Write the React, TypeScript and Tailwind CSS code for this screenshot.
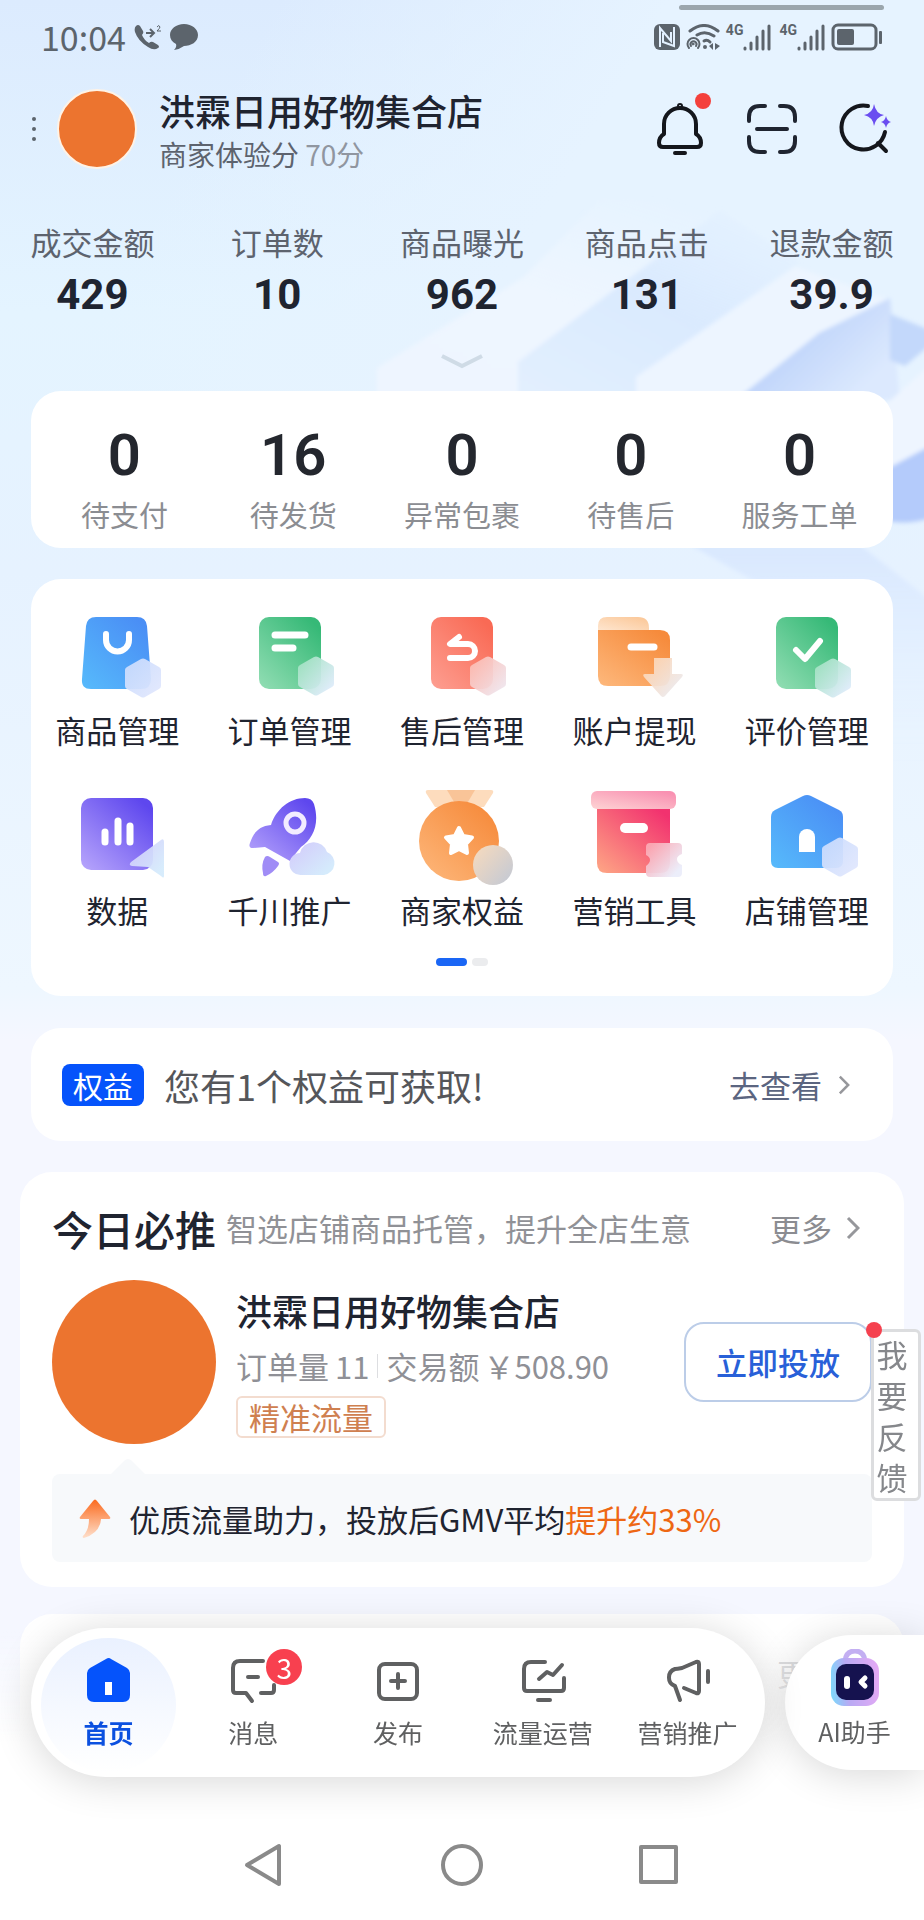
import type { ReactNode } from 'react';

const metrics = [
    { label: '成交金额', value: '429' },
    { label: '订单数', value: '10' },
    { label: '商品曝光', value: '962' },
    { label: '商品点击', value: '131' },
    { label: '退款金额', value: '39.9' },
];

const orders = [
    { label: '待支付', value: '0' },
    { label: '待发货', value: '16' },
    { label: '异常包裹', value: '0' },
    { label: '待售后', value: '0' },
    { label: '服务工单', value: '0' },
];

// Shared gradients for the shortcut icons
function IconGradients() {
    const diagonal = [
        { id: 'blue', from: '#4a8ef5', to: '#56b8fb' },
        { id: 'green', from: '#36b977', to: '#8edcb1' },
        { id: 'red', from: '#f96a55', to: '#fd9c8e' },
        { id: 'orange', from: '#f68b3c', to: '#fdb679' },
        { id: 'purple', from: '#5e47ee', to: '#b3a1fb' },
        { id: 'pink', from: '#f2326f', to: '#fda184' },
        { id: 'tabOrange', from: '#fbc99b', to: '#fee6d0' },
        { id: 'lid', from: '#f991b2', to: '#fdd0d2' },
    ];
    const glass = [
        { id: 'glassBlue', from: '#cbdcfd', to: '#dfe6fd' },
        { id: 'glassGreen', from: '#a4e2c4', to: '#dcebf8' },
        { id: 'glassRed', from: '#fcbdb4', to: '#f0e3ea' },
        { id: 'glassOrange', from: '#fdd5b3', to: '#eceaee' },
        { id: 'glassPurple', from: '#d3cdfb', to: '#d5ebfc' },
        { id: 'glassGray', from: '#f3d9bf', to: '#c9cbd2' },
        { id: 'glassPink', from: '#fba9b4', to: '#ebedfa' },
    ];
    return (
        <svg className="absolute h-0 w-0" aria-hidden="true">
            <defs>
                {diagonal.map((g) => (
                    <linearGradient key={g.id} id={g.id} x1="0.9" y1="0.1" x2="0.1" y2="1">
                        <stop offset="0" stopColor={g.from} />
                        <stop offset="1" stopColor={g.to} />
                    </linearGradient>
                ))}
                {glass.map((g) => (
                    <linearGradient key={g.id} id={g.id} x1="0.1" y1="0.1" x2="0.9" y2="0.8">
                        <stop offset="0" stopColor={g.from} />
                        <stop offset="1" stopColor={g.to} />
                    </linearGradient>
                ))}
            </defs>
        </svg>
    );
}

function ShortcutIcon({ children }: { children: ReactNode }) {
    return (
        <svg viewBox="0 0 90 90" className="h-[90px] w-[90px] overflow-visible" fill="none" aria-hidden="true">
            {children}
        </svg>
    );
}

function Hexagon({ y, fill }: { y: number; fill: string }) {
    return (
        <path
            transform={`translate(71 ${y})`}
            d="M-2 -19 Q0 -20 2 -19 L16 -11 Q18 -10 18 -8 V8 Q18 10 16 11 L2 19 Q0 20 -2 19 L-16 11 Q-18 10 -18 8 V-8 Q-18 -10 -16 -11 Z"
            fill={fill}
            opacity="0.94"
        />
    );
}

const shortcuts = [
    {
        label: '商品管理',
        icon: (
            <ShortcutIcon>
                <path d="M24 5 H65 Q74 5 75 14 L79 67 Q79 77 69 77 H19 Q9 77 10 67 L14 14 Q15 5 24 5 Z" fill="url(#blue)" />
                <path d="M34 22 v6 a11 11 0 0 0 23 0 v-6" stroke="#fff" strokeWidth="6" strokeLinecap="round" />
                <Hexagon y={66} fill="url(#glassBlue)" />
            </ShortcutIcon>
        ),
    },
    {
        label: '订单管理',
        icon: (
            <ShortcutIcon>
                <rect x="14" y="5" width="62" height="72" rx="10" fill="url(#green)" />
                <path d="M30 23 H60 M30 36 H48" stroke="#fff" strokeWidth="7" strokeLinecap="round" />
                <Hexagon y={64} fill="url(#glassGreen)" />
            </ShortcutIcon>
        ),
    },
    {
        label: '售后管理',
        icon: (
            <ShortcutIcon>
                <rect x="14" y="5" width="62" height="72" rx="10" fill="url(#red)" />
                <path d="M42 25 L33 32 H51 a7 7 0 0 1 0 14 H33" stroke="#fff" strokeWidth="6" strokeLinecap="round" strokeLinejoin="round" />
                <Hexagon y={64} fill="url(#glassRed)" />
            </ShortcutIcon>
        ),
    },
    {
        label: '账户提现',
        icon: (
            <ShortcutIcon>
                <path d="M9 20 V14 Q9 5 18 5 H49 Q60 5 60 16 V20 Z" fill="url(#tabOrange)" />
                <path d="M9 18 H71 Q81 18 81 28 V64 Q81 74 71 74 H19 Q9 74 9 64 Z" fill="url(#orange)" />
                <path d="M42 35 H65" stroke="#fff" strokeWidth="7" strokeLinecap="round" />
                <path d="M65 46 H83 V62 H92 Q95 62 93 65 L76 84 Q74 86 72 84 L55 65 Q53 62 56 62 H65 Z" fill="url(#glassOrange)" opacity="0.94" />
            </ShortcutIcon>
        ),
    },
    {
        label: '评价管理',
        icon: (
            <ShortcutIcon>
                <rect x="14" y="5" width="62" height="72" rx="10" fill="url(#green)" />
                <path d="M34 38 L43 47 L58 29" stroke="#fff" strokeWidth="6" strokeLinecap="round" strokeLinejoin="round" />
                <Hexagon y={66} fill="url(#glassGreen)" />
            </ShortcutIcon>
        ),
    },
    {
        label: '数据',
        icon: (
            <ShortcutIcon>
                <rect x="9" y="6" width="72" height="72" rx="10" fill="url(#purple)" />
                <path d="M33 40 V50 M46 29 V50 M58 34 V50" stroke="#fff" strokeWidth="7" strokeLinecap="round" />
                <path d="M59 70 L89 48 Q92 46 92 50 V84 Q92 87 89 84 L76 75 L60 74 Q56 73 59 70 Z" fill="url(#glassPurple)" opacity="0.94" />
            </ShortcutIcon>
        ),
    },
    {
        label: '千川推广',
        icon: (
            <ShortcutIcon>
                <path
                    d="M26 33 C31 17 45 6 60 6 Q67 6 69 12 C75 32 68 47 56 55 Q50 62 45 69 L20 55 L8 56 Q3 56 5 51 C8 42 13 34 26 33 Z"
                    fill="url(#purple)"
                />
                <circle cx="50" cy="31" r="9" stroke="#f2ecff" strokeWidth="5" />
                <path d="M20 65 Q22 63 25 65 L33 70 Q35 71 33 74 Q28 81 21 84 Q18 85 18 81 Q16 72 20 65 Z" fill="#a08cf6" />
                <path d="M56 83 a11 11 0 0 1 -1 -22 a14 14 0 0 1 27 -1 a12 12 0 0 1 -3 23 Z" fill="url(#glassPurple)" />
            </ShortcutIcon>
        ),
    },
    {
        label: '商家权益',
        icon: (
            <ShortcutIcon>
                <path d="M11 -2 H74 Q77 -2 76 1 L67 15 H18 L9 1 Q8 -2 11 -2 Z" fill="#fddcbd" />
                <path d="M30 -2 H58 L48 15 H40 Z" fill="#f9c498" />
                <circle cx="42" cy="49" r="40" fill="url(#orange)" />
                <path
                    d="M42 36 L46 44 L55 45.500 L49 52 L50 61 L42 57 L34 61 L35 52 L29 45.500 L38 44 Z"
                    fill="#fff"
                    stroke="#fff"
                    strokeWidth="4"
                    strokeLinejoin="round"
                />
                <circle cx="76" cy="73" r="20" fill="url(#glassGray)" />
            </ShortcutIcon>
        ),
    },
    {
        label: '营销工具',
        icon: (
            <ShortcutIcon>
                <path d="M8 14 H81 V71 Q81 81 71 81 H18 Q8 81 8 71 Z" fill="url(#pink)" />
                <rect x="2" y="-1" width="85" height="18" rx="6" fill="url(#lid)" />
                <rect x="31" y="31" width="28" height="10" rx="5" fill="#fff" />
                <path
                    d="M61 51 H89 Q93 51 93 55 V62 Q88 64 88 67 Q88 71 93 73 V81 Q93 85 89 85 H61 Q57 85 57 81 V74 Q61 71 61 68 Q61 65 57 63 V55 Q57 51 61 51 Z"
                    fill="url(#glassPink)"
                    opacity="0.95"
                />
            </ShortcutIcon>
        ),
    },
    {
        label: '店铺管理',
        icon: (
            <ShortcutIcon>
                <path d="M41 4 Q45 2 49 4 L77 18 Q81 20 81 25 V69 Q81 76 74 76 H16 Q9 76 9 69 V25 Q9 20 13 18 Z" fill="url(#blue)" />
                <path d="M37 60 V45 a8 8 0 0 1 16 0 V60 Z" fill="#fff" />
                <g transform="translate(7 0)">
                    <Hexagon y={65} fill="url(#glassBlue)" />
                </g>
            </ShortcutIcon>
        ),
    },
];

function TabIcon({ children }: { children: ReactNode }) {
    return (
        <svg
            viewBox="0 0 48 48"
            className="h-12 w-12"
            fill="none"
            stroke="#5f6061"
            strokeWidth="4"
            strokeLinecap="round"
            strokeLinejoin="round"
            aria-hidden="true"
        >
            {children}
        </svg>
    );
}

const tabs = [
    {
        label: '首页',
        active: true,
        icon: (
            <TabIcon>
                <path d="M22 3 Q25 1 27 3 L43 12 Q46 14 46 17 V39 Q46 46 39 46 H10 Q3 46 3 39 V17 Q3 14 6 12 Z" fill="#0553fb" stroke="none" />
                <rect x="21" y="26" width="7" height="13" fill="#fff" stroke="none" />
            </TabIcon>
        ),
    },
    {
        label: '消息',
        badge: 3,
        icon: (
            <TabIcon>
                <path d="M34 5 H11 Q4 5 4 12 V34 Q4 37 7 37 H17 L23 45 M32 37 H42 Q45 37 45 34 V29 M19 21 H29" />
            </TabIcon>
        ),
    },
    {
        label: '发布',
        icon: (
            <TabIcon>
                <rect x="5" y="8" width="38" height="35" rx="6" />
                <path d="M24 18 V32 M17 25 H31" />
            </TabIcon>
        ),
    },
    {
        label: '流量运营',
        icon: (
            <TabIcon>
                <path d="M26 6 H12 Q5 6 5 13 V32 Q5 35 8 35 H42 Q45 35 45 32 V22 M20 23 L28 16 L34 19 L43 9 M19 44 H31" />
            </TabIcon>
        ),
    },
    {
        label: '营销推广',
        icon: (
            <TabIcon>
                <path d="M20 32 L32 37 Q35 38 35 35 V8 Q35 5 32 6 L18 12 Q13 13 11 13 A9 9 0 0 0 11 30 L16 44 M44 15 V26" />
            </TabIcon>
        ),
    },
];

function ChevronRight({ className }: { className: string }) {
    return (
        <svg viewBox="0 0 14 24" className={className} fill="none" stroke="#96979b" strokeWidth="3" aria-hidden="true">
            <path d="M2 2 L12 12 L2 22" />
        </svg>
    );
}

function SignalBars() {
    return (
        <div className="flex items-start">
            <span className="font-[Roboto] text-[14px] leading-[13px] font-bold">4G</span>
            <svg viewBox="0 0 28 27" className="h-[27px] w-7" stroke="currentColor" strokeWidth="3" strokeLinecap="round" aria-hidden="true">
                <path d="M2 25 V24 M8 25 V19 M14 25 V13 M20 25 V7 M26 25 V2" />
            </svg>
        </div>
    );
}

function Backdrop() {
    return (
        <svg
            viewBox="0 0 924 1040"
            preserveAspectRatio="none"
            className="absolute inset-x-0 top-0 -z-10 h-[1040px] w-full"
            aria-hidden="true"
        >
            <defs>
                <linearGradient id="sky" x1="0" y1="0" x2="0" y2="1">
                    <stop offset="0" stopColor="#dcebfe" />
                    <stop offset="0.3" stopColor="#e4f4ff" />
                    <stop offset="0.55" stopColor="#e6f2ff" />
                    <stop offset="0.95" stopColor="#eef7ff" />
                    <stop offset="1" stopColor="#f5f7ff" />
                </linearGradient>
                <linearGradient id="glow" x1="0.3" y1="0" x2="0.7" y2="0.1">
                    <stop offset="0" stopColor="#e6f3ff" stopOpacity="0" />
                    <stop offset="1" stopColor="#e6f3ff" />
                </linearGradient>
                <linearGradient id="strip" x1="0.8" y1="0" x2="0.2" y2="1">
                    <stop offset="0" stopColor="#eef6ff" stopOpacity="0" />
                    <stop offset="0.5" stopColor="#eef6ff" />
                    <stop offset="1" stopColor="#eef5ff" />
                </linearGradient>
                <linearGradient id="shade" x1="0.9" y1="0" x2="0.1" y2="1">
                    <stop offset="0" stopColor="#daeafe" stopOpacity="0" />
                    <stop offset="0.5" stopColor="#daeafe" />
                    <stop offset="1" stopColor="#e2effe" />
                </linearGradient>
                <linearGradient id="fold" x1="0.3" y1="0.3" x2="0.9" y2="0.7">
                    <stop offset="0" stopColor="#bcd2fa" />
                    <stop offset="1" stopColor="#dce9fe" />
                </linearGradient>
                <linearGradient id="mist" x1="0" y1="0" x2="0" y2="1">
                    <stop offset="0" stopColor="#d9e8fe" />
                    <stop offset="1" stopColor="#e6f2ff" stopOpacity="0" />
                </linearGradient>
                <filter id="soften">
                    <feGaussianBlur stdDeviation="2" />
                </filter>
            </defs>
            <rect width="924" height="1040" fill="url(#sky)" />
            <rect width="924" height="400" fill="url(#glow)" />
            <g filter="url(#soften)">
                <path d="M377 368 L524 277 L600 200 H740 L518 365 V400 H377 Z" fill="url(#strip)" />
                <path d="M518 362 L720 210 L800 262 L636 377 V400 H518 Z" fill="url(#shade)" />
                <path d="M636 377 L795 267 L890 300 L742 400 H636 Z" fill="#edf5ff" />
                <path d="M742 395 L819 333 L890 298 L900 400 H742 Z" fill="url(#fold)" />
                <path d="M890 314 L930 330 V345 L905 366 L890 360 Z" fill="#c3d8fb" />
                <path d="M885 405 L930 365 V450 L885 480 Z" fill="#eef5ff" />
                <path d="M885 470 L930 446 V518 Q910 525 885 521 Z" fill="#b4cbfb" />
                <path d="M690 545 H860 L930 600 V760 H860 V590 H770 Z" fill="url(#mist)" />
            </g>
        </svg>
    );
}

export default function App() {
    return (
        <div className="relative isolate min-h-screen overflow-hidden bg-[#f5f7ff] font-['Noto_Sans_CJK_SC',sans-serif] text-[#1f2430]">
            <Backdrop />
            <IconGradients />

            {/* Status bar */}
            <div className="absolute top-[5px] right-10 h-[5px] w-[205px] rounded-full bg-[#9ba6ad]" />
            <div className="flex h-[74px] items-center justify-between pr-[41px] pl-[41px] text-[#5c646c]">
                <div className="flex items-center">
                    <span className="text-[34px] leading-10">10:04</span>
                    <svg viewBox="0 0 28 26" className="ml-2 h-[26px] w-7" aria-hidden="true">
                        <path
                            d="M2 2 Q4 0 6 2 L9 7 Q10 9 8 11 Q10 16 15 19 Q17 17 19 18 L24 21 Q26 23 24 24 Q20 27 14 23 Q4 17 1 8 Q0 4 2 2 Z"
                            fill="currentColor"
                        />
                        <path d="M12 9 H19 M16 5 L20 9 L16 13" fill="none" stroke="currentColor" strokeWidth="2" />
                        <path d="M23 3 Q25 0 26 3 Q26 4 23 7 H27" fill="none" stroke="currentColor" strokeWidth="1" />
                    </svg>
                    <svg viewBox="0 0 28 26" className="ml-2 h-[26px] w-7" fill="currentColor" aria-hidden="true">
                        <path d="M14 0 C22 0 28 5 28 11 C28 18 21 22 14 22 Q10 25 4 26 Q7 23 6 20 C2 18 0 15 0 11 C0 5 6 0 14 0 Z" />
                    </svg>
                </div>
                <div className="flex items-center">
                    <svg viewBox="0 0 26 26" className="h-[26px] w-[26px]" aria-hidden="true">
                        <rect width="26" height="26" rx="6" fill="currentColor" />
                        <path d="M6 23 V4 L17 17 V8 M9 9 V18 L20 22 V3" fill="none" stroke="#e4f1ff" strokeWidth="2" />
                    </svg>
                    <svg viewBox="0 0 34 26" className="mr-1.5 ml-1.5 h-[26px] w-[34px]" fill="none" stroke="currentColor" strokeLinecap="round" aria-hidden="true">
                        <path d="M4 7 Q18 -4 32 7 M11 11 Q19 6 28 12" strokeWidth="3" />
                        <path d="M18 17 Q21 15 24 18" strokeWidth="3" />
                        <path d="M3 24 A6 6 0 1 1 12 24 M5 22 A3 3 0 1 1 10 22" strokeWidth="2" />
                        <circle cx="7" cy="20" r="1" fill="currentColor" />
                        <circle cx="19" cy="23" r="2" fill="currentColor" stroke="none" />
                        <path d="M27 19 V26 L23 22 Z M29 19 L34 22 L29 26 Z" fill="currentColor" stroke="none" />
                    </svg>
                    <SignalBars />
                    <div className="ml-2">
                        <SignalBars />
                    </div>
                    <svg viewBox="0 0 52 28" className="ml-1.5 h-7 w-[52px]" aria-hidden="true">
                        <rect x="2" y="2" width="43" height="24" rx="5" fill="none" stroke="currentColor" strokeWidth="3" />
                        <rect x="6" y="6" width="17" height="16" rx="2" fill="currentColor" />
                        <rect x="48" y="8" width="3" height="13" rx="1" fill="currentColor" />
                    </svg>
                </div>
            </div>

            {/* Shop header */}
            <header className="flex items-center justify-between pt-[15px] pr-[33px] pl-[31px]">
                <div className="flex items-center">
                    <button type="button" aria-label="菜单">
                        <svg viewBox="0 0 6 24" className="h-6 w-1.5" fill="#5c646c" aria-hidden="true">
                            <circle cx="3" cy="2" r="2" />
                            <circle cx="3" cy="12" r="2" />
                            <circle cx="3" cy="22" r="2" />
                        </svg>
                    </button>
                    <div className="ml-5 h-20 w-20 rounded-full border-2 border-[#fff3e6] bg-[#ec742f]" />
                    <div className="ml-[22px] flex h-20 flex-col justify-center pt-1.5">
                        <h1 className="text-[36px] leading-[44px] font-medium">洪霖日用好物集合店</h1>
                        <p className="text-[28px] leading-[44px] text-[#5d636e]">
                            商家体验分 <span className="text-[#9096a0]">70分</span>
                        </p>
                    </div>
                </div>
                <div className="flex items-center gap-[42px]">
                    <button type="button" aria-label="通知" className="relative">
                        <svg viewBox="0 0 50 52" className="h-[52px] w-[50px]" fill="none" stroke="#14161c" strokeWidth="4" strokeLinecap="round" strokeLinejoin="round" aria-hidden="true">
                            <path d="M25 5 A16 16 0 0 0 9 21 V31 Q4 34 4 40 Q4 44 8 44 H42 Q46 44 46 40 Q46 34 41 31 V21 A16 16 0 0 0 25 5 Z M20 50 H30" />
                            <circle cx="25" cy="3" r="1" />
                        </svg>
                        <span className="absolute -top-2.5 left-10 h-4 w-4 rounded-full bg-[#f4403c]" />
                    </button>
                    <button type="button" aria-label="扫一扫">
                        <svg viewBox="0 0 50 50" className="h-[50px] w-[50px]" fill="none" stroke="#1f2430" strokeWidth="4" strokeLinecap="round" aria-hidden="true">
                            <path d="M2 17 V13 Q2 2 13 2 H18 M33 2 H37 Q48 2 48 13 V17 M48 33 V37 Q48 48 37 48 H33 M18 48 H13 Q2 48 2 37 V33 M10 25 H40" />
                        </svg>
                    </button>
                    <button type="button" aria-label="搜索">
                        <svg viewBox="0 0 52 50" className="h-[50px] w-[52px] overflow-visible" fill="none" stroke="#14161c" strokeWidth="4" strokeLinecap="round" aria-hidden="true">
                            <path d="M29 2 A22 22 0 1 0 46 28 M39 39 L47 47" />
                            <path d="M35 0 Q37 10 45 11 Q37 13 35 22 Q34 13 25 11 Q34 9 35 0 Z" fill="#6a4df0" stroke="none" />
                            <path d="M47 12 Q48 17 52 18 Q48 19 47 24 Q46 19 42 18 Q46 17 47 12 Z" fill="#6a4df0" stroke="none" />
                        </svg>
                    </button>
                </div>
            </header>

            {/* Key metrics */}
            <dl className="mt-[53px] grid grid-cols-5 text-center">
                {metrics.map((metric) => (
                    <div key={metric.label}>
                        <dt className="text-[31px] leading-10 text-[#5d636e]">{metric.label}</dt>
                        <dd className="mt-2 font-[Roboto] text-[42px] leading-[50px] font-bold">{metric.value}</dd>
                    </div>
                ))}
            </dl>
            <button type="button" aria-label="展开" className="mx-auto mt-[34px] block">
                <svg viewBox="0 0 42 15" className="h-[15px] w-[42px]" fill="none" stroke="#cfdbe6" strokeWidth="4" aria-hidden="true">
                    <path d="M1 2 L21 12 L41 2" />
                </svg>
            </button>

            {/* Orders */}
            <section className="mx-[31px] mt-[22px] grid grid-cols-5 rounded-[30px] bg-white px-[9px] pt-8 pb-3.5 text-center">
                {orders.map((order) => (
                    <div key={order.label}>
                        <div className="font-[Roboto] text-[58px] leading-[64px] font-semibold text-[#24272e]">{order.value}</div>
                        <div className="mt-[7px] text-[29px] leading-10 text-[#8b8d92]">{order.label}</div>
                    </div>
                ))}
            </section>

            {/* Shortcuts */}
            <section className="mx-[31px] mt-[31px] rounded-[30px] bg-white pt-[33px] pb-[30px]">
                <div className="grid grid-cols-5 gap-y-[42px]">
                    {shortcuts.map((item) => (
                        <button key={item.label} type="button" className="flex flex-col items-center">
                            {item.icon}
                            <span className="mt-2 text-[31px] leading-10">{item.label}</span>
                        </button>
                    ))}
                </div>
                <div className="mt-7 flex justify-center gap-[5px]">
                    <span className="h-2 w-[31px] rounded-full bg-[#1a66f5]" />
                    <span className="h-2 w-4 rounded-full bg-[#ebecee]" />
                </div>
            </section>

            {/* Benefits */}
            <section className="mx-[31px] mt-8 flex h-[113px] items-center rounded-[30px] bg-white pr-[43px] pl-[31px]">
                <span className="rounded-lg bg-[#0553fb] px-[11px] text-[30px] leading-[42px] text-white">权益</span>
                <p className="ml-5 text-[36px] leading-[48px] text-[#55565a]">您有1个权益可获取!</p>
                <a href="#benefits" className="ml-auto flex items-center gap-4 text-[31px] leading-10 text-[#5b6580]">
                    去查看
                    <ChevronRight className="h-5 w-3" />
                </a>
            </section>

            {/* Today's pick */}
            <section className="mx-5 mt-[31px] rounded-[32px] bg-white px-8 pt-7 pb-[25px]">
                <div className="flex items-center">
                    <h2 className="text-[41px] leading-[56px] font-medium">今日必推</h2>
                    <p className="ml-2.5 text-[31px] leading-10 text-[#909196]">智选店铺商品托管，提升全店生意</p>
                    <a href="#more" className="mr-3 ml-auto flex items-center gap-3.5 text-[31px] leading-10 text-[#8b8c91]">
                        更多
                        <ChevronRight className="h-6 w-3.5" />
                    </a>
                </div>
                <div className="mt-6 flex items-center">
                    <div className="h-[164px] w-[164px] shrink-0 rounded-full bg-[#ec742f]" />
                    <div className="ml-5">
                        <h3 className="text-[36px] leading-[48px] font-medium">洪霖日用好物集合店</h3>
                        <p className="mt-3 flex items-center text-[31px] leading-10 text-[#8f9096]">
                            订单量
                            <span className="ml-1.5">11</span>
                            <span className="mx-2 h-6 w-px bg-[#dddee1]" />
                            交易额
                            <span className="ml-1">￥508.90</span>
                        </p>
                        <span className="mt-2.5 inline-block rounded-md border-2 border-[#f3dccf] px-[11px] text-[31px] leading-[38px] text-[#cf8050]">精准流量</span>
                    </div>
                    <button type="button" className="ml-auto h-20 w-[188px] rounded-[20px] border-2 border-[#bccde8] text-[31px] font-medium text-[#2860d8]">
                        立即投放
                    </button>
                </div>
                <svg viewBox="0 0 34 16" className="mt-3.5 ml-[59px] h-4 w-[34px]" fill="#f7f9fb" aria-hidden="true">
                    <path d="M0 16 L13 3 Q17 -1 21 3 L34 16 Z" />
                </svg>
                <div className="flex h-[88px] items-center rounded-lg bg-[#f7f9fb] pt-0.5 pl-[27px]">
                    <svg viewBox="0 0 32 40" className="h-10 w-8" aria-hidden="true">
                        <defs>
                            <linearGradient id="rise" x1="0" y1="0" x2="0" y2="1">
                                <stop offset="0" stopColor="#fb6a1e" />
                                <stop offset="1" stopColor="#fee0cc" />
                            </linearGradient>
                        </defs>
                        <path d="M14 2 Q16 -1 18 2 L31 18 Q32 20 30 20 H22 Q21 34 5 39 Q3 39 4 37 Q10 31 10 20 H2 Q0 20 1 18 Z" fill="url(#rise)" />
                    </svg>
                    <p className="ml-[18px] text-[31px] leading-10">
                        优质流量助力，投放后GMV平均<span className="text-[#ee6713]">提升约33%</span>
                    </p>
                </div>
            </section>

            <section className="mx-5 mt-[27px] h-[290px] rounded-t-[32px] bg-white px-8 pt-[39px]">
                <a href="#next" className="mr-[33px] block text-right text-[31px] leading-10 text-[#cfd0d3]">更多</a>
            </section>

            {/* Feedback tab */}
            <button
                type="button"
                className="fixed right-[3px] bottom-[419px] w-[50px] rounded-md border-[3px] border-[#dcdddf] bg-white py-px pr-2.5 pl-0.5 text-[31px] leading-[41px] text-[#85878b]"
            >
                我要反馈
                <span className="absolute -top-2.5 -left-2 h-4 w-4 rounded-full bg-[#f5414f]" />
            </button>

            {/* Bottom navigation */}
            <footer className="fixed inset-x-0 bottom-0 bg-linear-to-b from-transparent via-white via-40% to-white">
                <div className="flex items-center justify-between pl-[31px]">
                    <nav className="isolate flex h-[149px] w-[734px] rounded-full bg-white px-[5px] shadow-[0_4px_40px_rgba(0,0,0,0.16)]">
                        {tabs.map((tab) => (
                            <a
                                key={tab.label}
                                href={`#${tab.label}`}
                                className={
                                    tab.active
                                        ? 'relative flex flex-1 flex-col items-center pt-7 font-bold text-[#0b50e0]'
                                        : 'relative flex flex-1 flex-col items-center pt-7 text-[#5f6061]'
                                }
                            >
                                {tab.active && (
                                    <span className="absolute inset-x-[5px] top-2.5 -z-10 h-[134px] rounded-full bg-linear-to-b from-[#eaf1ff] to-white" />
                                )}
                                <span className="relative">
                                    {tab.icon}
                                    {tab.badge && (
                                        <span className="absolute -top-[7px] left-[37px] h-9 w-9 rounded-full bg-[#f8404f] text-center text-[28px] leading-9 font-normal text-white">
                                            {tab.badge}
                                        </span>
                                    )}
                                </span>
                                <span className="mt-3 text-[25px] leading-8">{tab.label}</span>
                            </a>
                        ))}
                    </nav>
                    <button
                        type="button"
                        className="flex h-[135px] w-[139px] flex-col items-center rounded-l-full bg-white pt-3.5 text-[25px] leading-8 text-[#5f6061] shadow-[0_4px_40px_rgba(0,0,0,0.16)]"
                    >
                        <svg viewBox="0 0 50 58" className="h-[58px] w-[50px]" aria-hidden="true">
                            <defs>
                                <linearGradient id="bot" x1="0" y1="0.6" x2="1" y2="0.5">
                                    <stop offset="0" stopColor="#7fd6fb" />
                                    <stop offset="0.35" stopColor="#b9a9f3" />
                                    <stop offset="1" stopColor="#e3a9f5" />
                                </linearGradient>
                            </defs>
                            <path d="M15 12 Q16 2 25 2 Q34 2 35 12" fill="none" stroke="#c3aff2" strokeWidth="5" />
                            <rect x="1" y="9" width="48" height="48" rx="13" fill="url(#bot)" />
                            <rect x="6" y="15" width="38" height="36" rx="10" fill="#15124f" />
                            <rect x="14" y="27" width="6" height="13" rx="3" fill="#fff" />
                            <path d="M35 29 L31 33 L35 37" fill="none" stroke="#fff" strokeWidth="5" strokeLinecap="round" strokeLinejoin="round" />
                        </svg>
                        <span className="mt-2">AI助手</span>
                    </button>
                </div>
                <div className="mt-[63px] flex h-20 justify-center gap-[155px]">
                    <button type="button" aria-label="返回" className="h-12 w-10">
                        <svg viewBox="0 0 40 48" className="h-12 w-10" fill="none" stroke="#8a8a8a" strokeWidth="4" strokeLinejoin="round" aria-hidden="true">
                            <path d="M36 6 V44 L4 25 Z" />
                        </svg>
                    </button>
                    <button type="button" aria-label="主屏幕" className="h-12 w-12">
                        <svg viewBox="0 0 48 48" className="h-12 w-12" fill="none" stroke="#8a8a8a" strokeWidth="4" aria-hidden="true">
                            <circle cx="24" cy="25" r="19" />
                        </svg>
                    </button>
                    <button type="button" aria-label="最近任务" className="h-12 w-10">
                        <svg viewBox="2 0 40 48" className="h-12 w-10 overflow-visible" fill="none" stroke="#8a8a8a" strokeWidth="4" strokeLinejoin="round" aria-hidden="true">
                            <rect x="2" y="7" width="35" height="35" />
                        </svg>
                    </button>
                </div>
            </footer>
        </div>
    );
}
